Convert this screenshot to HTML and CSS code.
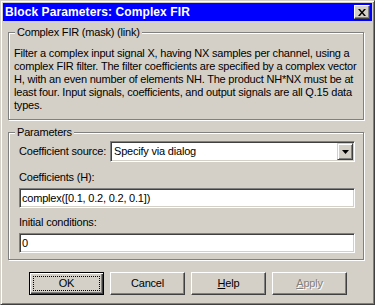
FILE: index.html
```html
<!DOCTYPE html>
<html lang="en">
<head>
    <meta charset="UTF-8">
    <title>Block Parameters: Complex FIR</title>
    <link rel="stylesheet" href="styles.css">
</head>
<body>
    <div class="window">
        <div class="titlebar">
            <span class="title">Block Parameters: Complex FIR</span>
            <span class="close">
                <svg width="8" height="7" viewBox="0 0 8 7">
                    <path d="M0 0h2l2 2.5L6 0h2L5 3.5 8 7H6L4 4.5 2 7H0l3-3.5z" fill="#000"/>
                </svg>
            </span>
        </div>

        <fieldset class="group desc">
            <legend>Complex FIR (mask) (link)</legend>
            <p>Filter a complex input signal X, having NX samples per channel, using a<br>complex FIR filter. The filter coefficients are specified by a complex vector<br>H, with an even number of elements NH. The product NH*NX must be at<br>least four. Input signals, coefficients, and output signals are all Q.15 data<br>types.</p>
        </fieldset>

        <fieldset class="group params">
            <legend>Parameters</legend>
            <div class="row">
                <label class="row-label">Coefficient source:</label>
                <div class="combo">
                    <span class="combo-text">Specify via dialog</span>
                    <span class="combo-arrow">
                        <svg width="7" height="4" viewBox="0 0 7 4"><path d="M0 0h7L3.5 4z" fill="#000"/></svg>
                    </span>
                </div>
            </div>
            <label class="field-label">Coefficients (H):</label>
            <div class="edit">complex([0.1, 0.2, 0.2, 0.1])</div>
            <label class="field-label second">Initial conditions:</label>
            <div class="edit">0</div>
        </fieldset>

        <div class="buttons">
            <div class="btn default"><span class="focus">OK</span></div>
            <div class="btn">Cancel</div>
            <div class="btn"><span><u>H</u>elp</span></div>
            <div class="btn disabled"><span><u>A</u>pply</span></div>
        </div>
    </div>
</body>
</html>
```

FILE: styles.css
```css
body {
    margin: 0;
    padding: 0;
    background: #d4d0c8;
}

.window {
    width: 375px;
    height: 305px;
    box-sizing: border-box;
    border: 1px solid;
    border-color: #d4d0c8 #404040 #404040 #d4d0c8;
    box-shadow: inset 1px 1px #fff, inset -1px -1px #808080;
    padding: 2px;
    background: #d4d0c8; /* classic 3D face */
    display: flex;
    flex-direction: column;
    font-family: "Liberation Sans", Arial, sans-serif;
    font-size: 11px;
    line-height: 13px;
    letter-spacing: -0.2px;
    color: #000;
}

.titlebar {
    height: 18px;
    flex: none;
    background: #0000ff;
    display: flex;
    align-items: center;
    justify-content: space-between;
    padding: 0 2px 0 2px;
}

.title {
    color: #fff;
    font-weight: bold;
    font-size: 12px;
    letter-spacing: 0.1px;
}

.close {
    width: 16px;
    height: 14px;
    box-sizing: border-box;
    background: #d4d0c8;
    border: 1px solid;
    border-color: #fff #404040 #404040 #fff;
    box-shadow: inset -1px -1px #808080;
    display: flex;
    align-items: center;
    justify-content: center;
}

/* group boxes with etched border */
.group {
    margin: 5px 8px 0 5px;
    border: 1px solid #808080;
    box-shadow: inset 1px 1px #fff, 1px 1px #fff;
    min-width: 0;
}

.group legend {
    padding: 0 2px;
    background: #d4d0c8;
    line-height: 13px;
}

.desc {
    padding: 8px 8px 7px 5px;
}

.desc legend {
    margin-left: 1px;
}

.desc p {
    margin: 0;
    white-space: nowrap;
}

.params {
    margin-top: 6px;
    padding: 0 8px 6px 10px;
}

.params legend {
    margin-left: -4px;
}

.row {
    display: flex;
    align-items: center;
    margin-top: 2px;
}

.row-label {
    flex: 0 0 91px;
}

.combo {
    flex: 1;
    height: 21px;
    box-sizing: border-box;
    border: 1px solid;
    border-color: #808080 #fff #fff #808080;
    box-shadow: inset 1px 1px #404040, inset -1px -1px #d4d0c8;
    background: #fff;
    display: flex;
    align-items: center;
}

.combo-text {
    padding-left: 3px;
}

.combo-arrow {
    margin: 1px 1px 1px auto;
    width: 16px;
    height: 17px;
    box-sizing: border-box;
    background: #d4d0c8;
    border: 1px solid;
    border-color: #d4d0c8 #404040 #404040 #d4d0c8;
    box-shadow: inset 1px 1px #fff, inset -1px -1px #808080;
    display: flex;
    align-items: center;
    justify-content: center;
}

.field-label {
    display: block;
    margin-top: 9px;
}

.field-label.second {
    margin-top: 8px;
}

.edit {
    margin-top: 4px;
    height: 20px;
    box-sizing: border-box;
    border: 1px solid;
    border-color: #808080 #fff #fff #808080;
    box-shadow: inset 1px 1px #404040, inset -1px -1px #d4d0c8;
    background: #fff;
    padding-left: 2px;
    display: flex;
    align-items: center;
}

.buttons {
    display: flex;
    justify-content: flex-end;
    gap: 6px;
    margin-top: 12px;
    padding-right: 25px;
}

.btn {
    width: 75px;
    height: 23px;
    box-sizing: border-box;
    border: 1px solid;
    border-color: #fff #404040 #404040 #fff;
    box-shadow: inset -1px -1px #808080;
    display: flex;
    align-items: center;
    justify-content: center;
}

.btn.default {
    border-color: #000;
    box-shadow: inset 1px 1px #fff, inset -1px -1px #404040, inset -2px -2px #808080;
}

.btn .focus {
    width: 67px;
    height: 15px;
    box-sizing: border-box;
    outline: 1px dotted #000;
    outline-offset: -1px;
    display: flex;
    align-items: center;
    justify-content: center;
}

.btn.disabled {
    color: #808080;
    text-shadow: 1px 1px #fff;
}
```
